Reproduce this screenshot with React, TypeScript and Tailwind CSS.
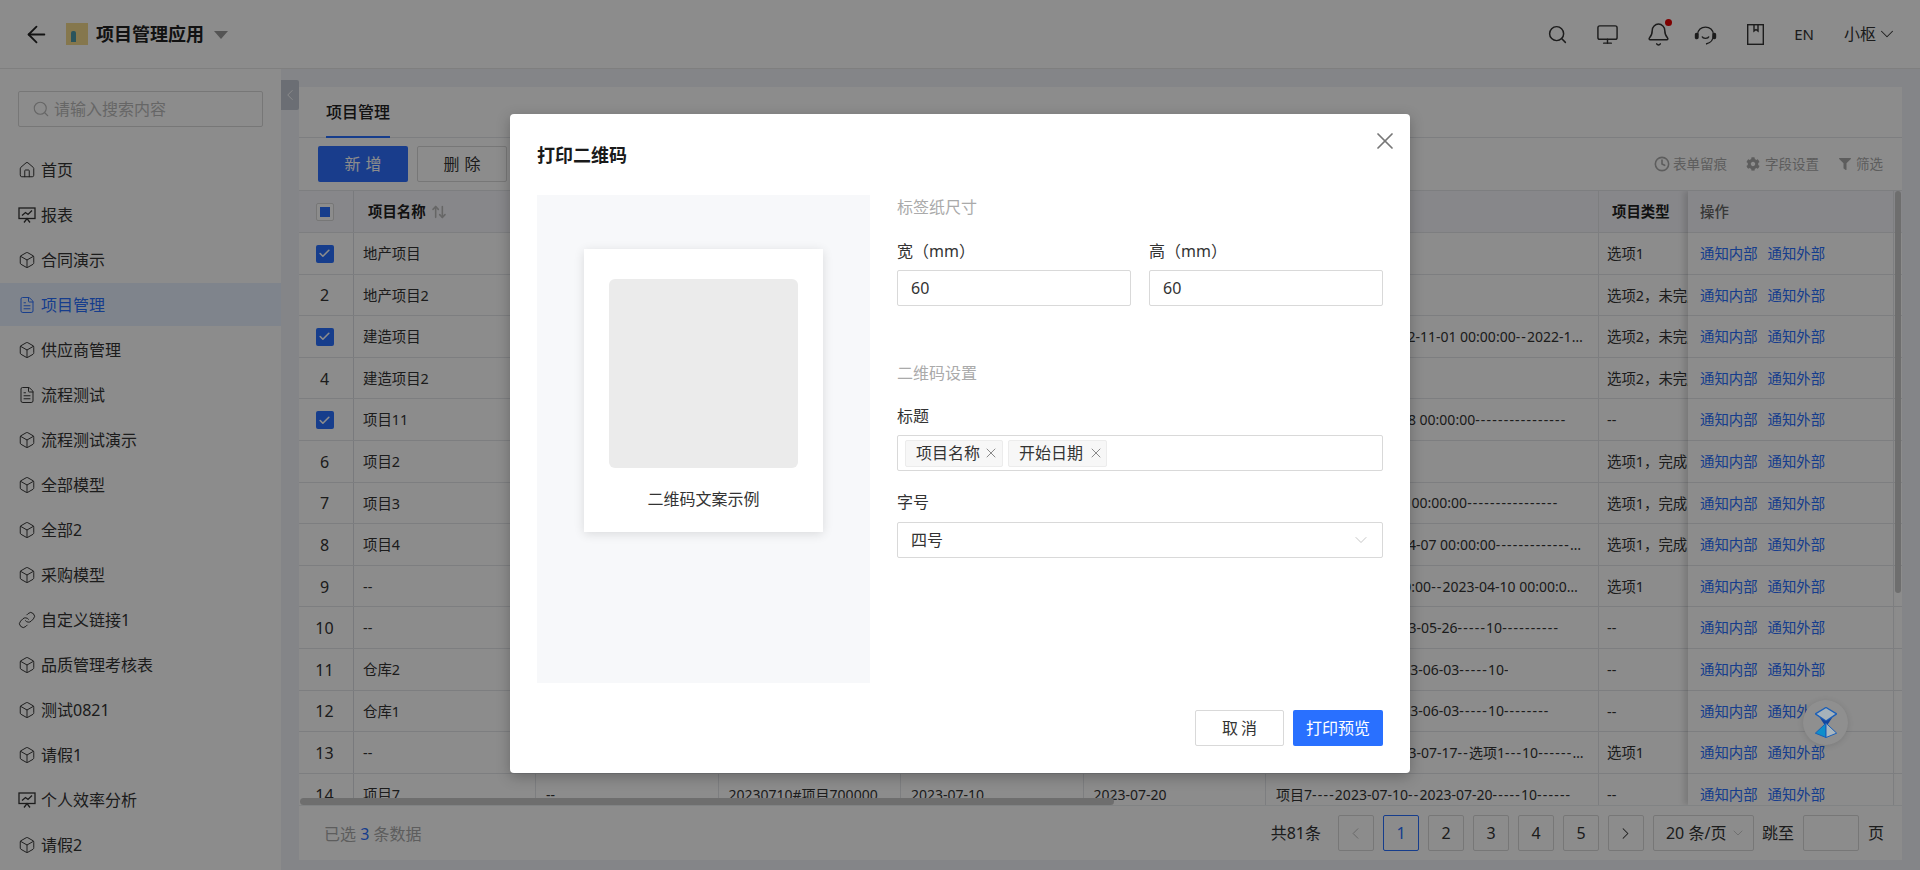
import React from "react";
import { Search, Monitor, Bell, ChevronDown, ChevronLeft, ChevronRight, Box, House, FileText, Link, X, Clock, ArrowLeft, ArrowUpDown, Check } from "lucide-react";
import { FaCog, FaFilter } from "react-icons/fa";

const FONT = '"Noto Sans","Noto Sans CJK SC",sans-serif';

function ChartBoard({ size = 17, strokeWidth = 1.4 }: { size?: number; strokeWidth?: number }) {
  return (
    <svg width={size} height={size} viewBox="0 0 18 18" fill="none" stroke="currentColor" strokeWidth={strokeWidth}>
      <rect x="1" y="2" width="16" height="10.5" />
      <path d="M4 9.5 L7.5 6.5 L10 8.5 L14 4.5" />
      <path d="M6 16.5 L9 12.5 L12 16.5" />
    </svg>
  );
}

type IconT = React.ComponentType<{ size?: number; strokeWidth?: number }>;
const menu: [string, IconT][] = [
  ["首页", House], ["报表", ChartBoard], ["合同演示", Box], ["项目管理", FileText], ["供应商管理", Box],
  ["流程测试", FileText], ["流程测试演示", Box], ["全部模型", Box], ["全部2", Box], ["采购模型", Box],
  ["自定义链接1", Link], ["品质管理考核表", Box], ["测试0821", Box], ["请假1", Box], ["个人效率分析", ChartBoard], ["请假2", Box],
];

type Row = { n: string; name: string; cols?: string[]; detail: string; type: string; checked?: boolean };
const D19 = "-------------------";
const rows: Row[] = [
  { n: "1", name: "地产项目", detail: "", type: "选项1", checked: true },
  { n: "2", name: "地产项目2", detail: "", type: "选项2，未完成" },
  { n: "3", name: "建造项目", detail: "建造项目---------2022-11-01 00:00:00--2022-11-30 00:00:00----", type: "选项2，未完成", checked: true },
  { n: "4", name: "建造项目2", detail: "", type: "选项2，未完成" },
  { n: "5", name: "项目11", detail: "项目11----2023-03-08 00:00:00----------------", type: "--", checked: true },
  { n: "6", name: "项目2", detail: "", type: "选项1，完成" },
  { n: "7", name: "项目3", detail: "项目3----2023-03-09 00:00:00----------------", type: "选项1，完成" },
  { n: "8", name: "项目4", detail: "项目4---------2023-04-07 00:00:00-------------------------", type: "选项1，完成" },
  { n: "9", name: "--", detail: "----2023-04-01 00:00:00--2023-04-10 00:00:00-------", type: "选项1" },
  { n: "10", name: "--", detail: D19 + "2023-05-26-----10----------", type: "--" },
  { n: "11", name: "仓库2", detail: "仓库2-------------2023-06-03-----10-", type: "--" },
  { n: "12", name: "仓库1", detail: "仓库1-------------2023-06-03-----10--------", type: "--" },
  { n: "13", name: "--", detail: D19 + "2023-07-17--选项1---10-----------------", type: "选项1" },
  { n: "14", name: "项目7", cols: ["--", "20230710#项目700000", "2023-07-10", "2023-07-20"], detail: "项目7----2023-07-10--2023-07-20-----10------", type: "--" },
];

function Detail({ text }: { text: string }) {
  return (
    <span className="truncate text-sm">
      {text.split(/(-{2,})/).map((part, i) =>
        part.startsWith("--") ? <span key={i} className="tracking-[1.2px]">{part}</span> : <span key={i}>{part}</span>
      )}
    </span>
  );
}

function HourglassLogo() {
  return (
    <svg width="22" height="31" viewBox="0 0 66 92" fill="none">
      <path d="M33 1 L65 20 L33 42 L1 20 Z" fill="#a6b2ba" stroke="#1b5fb8" strokeWidth="4" />
      <path d="M14 31 L33 42 L52 31 L38 52 L28 52 Z" fill="#14469e" />
      <path d="M33 48 L1 78 L33 91 Z" fill="#0f8fcb" stroke="#1b5fb8" strokeWidth="3" />
      <path d="M33 48 L65 78 L33 91 Z" fill="#aab6be" stroke="#1b5fb8" strokeWidth="3" />
    </svg>
  );
}

function Pager({ children, active, muted }: { children: React.ReactNode; active?: boolean; muted?: boolean }) {
  return (
    <div className={`w-9 h-9 flex items-center justify-center rounded-[2px] border bg-white text-base ${active ? "border-[#2970ff] text-[#2970ff]" : muted ? "border-[#d9d9d9] text-[#bbb]" : "border-[#d9d9d9] text-[#333]"}`}>
      {children}
    </div>
  );
}

function TableRow({ row }: { row: Row }) {
  return (
    <div className="flex h-[41.6px] shrink-0 border-b border-[#e4e6ea] text-[14.4px] text-[#333]">
      <div className="w-[55px] shrink-0 flex items-center justify-center border-r border-[#dcdfe4] pr-[3px] pt-[1px]">
        {row.checked ? (
          <span className="w-[18px] h-[18px] rounded-[2px] bg-[#2970ff] flex items-center justify-center"><Check size={13} color="#fff" strokeWidth={3} /></span>
        ) : (
          <span className="text-base">{row.n}</span>
        )}
      </div>
      <div className="w-[182px] shrink-0 flex items-center pl-[9px] pt-[1px] border-r border-[#e4e6ea]">{row.name}</div>
      {[0, 1, 2, 3].map((i) => (
        <div key={i} className="w-[182.5px] shrink-0 flex items-center pl-[10px] pt-[1px] text-sm border-r border-[#e4e6ea] whitespace-nowrap">{row.cols?.[i]}</div>
      ))}
      <div className="w-[333px] shrink-0 flex items-center pl-[10px] pr-[13px] pt-[1px] border-r border-[#e4e6ea]"><Detail text={row.detail} /></div>
      <div className="flex-1 flex items-center pl-[8px] pt-[1px] whitespace-nowrap overflow-hidden">{row.type}</div>
    </div>
  );
}

export default function App() {
  return (
    <div className="relative w-full h-screen overflow-hidden bg-[#f0f3f8] flex flex-col" style={{ fontFamily: FONT }}>
      {/* top bar */}
      <header className="h-[69px] shrink-0 bg-white border-b border-[#e8e8e8] flex items-center pl-[23px] pr-[22px]">
        <ArrowLeft size={27} strokeWidth={1.6} color="#222" />
        <div className="ml-[16px] w-[22px] h-[22px] bg-[#f2d98c] flex items-end justify-center"><span className="w-[5px] h-[11px] mb-[3px] mr-[8px] bg-[#4d9aa8] rounded-t-[2px]" /></div>
        <span className="ml-[8px] text-lg font-bold text-[#222]">项目管理应用</span>
        <span className="ml-[10px] mt-[1px] w-0 h-0 border-x-[7px] border-x-transparent border-t-[8px] border-t-[#999]" />
        <div className="flex-1" />
        <div className="flex items-center text-[#333]">
          <Search size={21} strokeWidth={1.7} />
          <Monitor size={23} strokeWidth={1.5} className="ml-[28px]" />
          <div className="relative ml-[27px]">
            <Bell size={25} strokeWidth={1.4} />
            <span className="absolute -top-[3px] right-[-1px] w-[7px] h-[7px] rounded-full bg-[#e60000]" />
          </div>
          <svg className="ml-[23px]" width="23" height="23" viewBox="0 0 23 23" fill="none" stroke="currentColor" strokeWidth="1.4">
            <path d="M3.5 12 C3.5 1.5 19.5 1.5 19.5 12 C19.5 16 17 20 12 21" />
            <path d="M8 13.5 C9 16 14 16 15 13.5" />
            <rect x="1.5" y="10.5" width="2.5" height="5" rx="1" fill="currentColor" />
            <rect x="19" y="10.5" width="2.5" height="5" rx="1" fill="currentColor" />
          </svg>
          <svg className="ml-[30px]" width="17" height="21" viewBox="0 0 17 21" fill="none" stroke="#333" strokeWidth="1.4"><rect x="0.7" y="0.7" width="15.6" height="19.6" /><path d="M7 1v6l2-1.5L11 7V1" /></svg>
          <span className="ml-[30px] text-[15px]">EN</span>
          <span className="ml-[30px] text-base">小枢</span>
          <ChevronDown size={22} strokeWidth={1.1} className="ml-0" />
        </div>
      </header>

      <div className="flex-1 flex min-h-0">
        {/* sidebar */}
        <aside className="w-[281px] shrink-0 bg-white overflow-hidden pt-[22px]">
          <div className="mx-[18px] h-[36px] border border-[#d9d9d9] rounded-[2px] flex items-center pl-[13px] text-base text-[#bbb]">
            <Search size={18} strokeWidth={1.5} />
            <span className="ml-[4px]">请输入搜索内容</span>
          </div>
          <nav className="mt-[21px]">
            {menu.map(([label, Icon]) => {
              const active = label === "项目管理";
              const cube = Icon === Box;
              return (
                <div key={label} className={`h-[43px] mb-[2px] flex items-center pl-[18px] text-base ${active ? "bg-[#e8f0ff] text-[#2970ff]" : "text-[#333]"}`}>
                  <span className="w-[18px] flex justify-center"><Icon size={cube ? 20 : 18} strokeWidth={1.3} /></span>
                  <span className="ml-[5px]">{label}</span>
                </div>
              );
            })}
          </nav>
        </aside>

        {/* handle */}
        <div className="w-[18px] shrink-0 pt-[11px]">
          <div className="h-[30px] bg-[#c3c9d4] rounded-r-[2px] flex items-center justify-center"><ChevronLeft size={18} color="#fff" strokeWidth={1.2} /></div>
        </div>

        {/* content */}
        <main className="w-[1603px] shrink-0 mt-[18px] mb-[10px] bg-white flex flex-col min-h-0">
          <div className="h-[51px] shrink-0 border-b border-[#e4e6ea] flex pl-[27px]">
            <div className="h-[51px] border-b-[2px] border-[#2970ff] pt-[1px] flex items-center text-base font-medium text-[#222]">项目管理</div>
          </div>
          <div className="h-[53px] shrink-0 border-b border-[#e4e6ea] flex items-center pl-[19px] pr-[19px]">
            <div className="w-[90px] h-9 rounded-[2px] bg-[#2f6fff] text-white text-base flex items-center justify-center tracking-[5px] pl-[5px]">新增</div>
            <div className="ml-[9px] w-[90px] h-9 rounded-[2px] border border-[#d9d9d9] text-[#333] text-base flex items-center justify-center tracking-[5px] pl-[5px]">删除</div>
            <div className="flex-1" />
            <div className="flex items-center text-[13.5px] text-[#aaa]">
              <Clock size={16} strokeWidth={2.4} />
              <span className="ml-[3px]">表单留痕</span>
              <FaCog size={14} className="ml-[19px]" />
              <span className="ml-[5px]">字段设置</span>
              <FaFilter size={12} className="ml-[20px]" />
              <span className="ml-[5px]">筛选</span>
            </div>
          </div>

          <div className="relative flex-1 min-h-0 overflow-hidden flex flex-col">
            <div className="h-[42px] shrink-0 flex bg-[#f6f6fb] border-b border-[#e4e6ea] text-[14.4px]">
              <div className="w-[55px] shrink-0 flex items-center justify-center border-r border-[#dcdfe4] pr-[3px]">
                <span className="w-[18px] h-[18px] rounded-[2px] border border-[#d9d9d9] bg-white flex items-center justify-center"><span className="w-[10px] h-[10px] bg-[#2970ff]" /></span>
              </div>
              <div className="w-[182px] shrink-0 flex items-center pl-[14px] font-bold text-[#222] border-r border-[#e4e6ea]">项目名称<ArrowUpDown size={16} strokeWidth={2.4} color="#bbb" className="ml-[5px]" /></div>
              <div className="w-[1063px] shrink-0 border-r border-[#e4e6ea]" />
              <div className="flex-1 flex items-center pl-[13px] font-bold text-[#222]">项目类型</div>
            </div>
            <div className="flex-1 min-h-0 overflow-hidden flex flex-col">
              {rows.map((r) => <TableRow key={r.n} row={r} />)}
            </div>
            {/* fixed action column */}
            <div className="absolute top-0 bottom-0 left-[1389px] w-[206px] bg-white border-r border-[#e4e6ea] shadow-[-4px_0_6px_rgba(0,0,0,0.14)] flex flex-col text-[14.4px] overflow-hidden">
              <div className="h-[42px] shrink-0 flex items-center pl-[12px] bg-[#f6f6fb] border-b border-[#e4e6ea] text-[#666] font-medium">操作</div>
              {rows.map((r) => (
                <div key={r.n} className="h-[41.6px] shrink-0 flex items-center pl-[12px] pt-[1px] gap-[10px] border-b border-[#e4e6ea] text-[#2970ff]">
                  <span>通知内部</span><span>通知外部</span>
                </div>
              ))}
            </div>
            <div className="absolute top-0 right-[1px] w-[6px] h-[402px] rounded-[3px] bg-[#c9c9c9]" />
            <div className="absolute bottom-0 left-[1px] w-[814px] h-[7px] rounded-[4px] bg-[#c9c9c9]" />
          </div>

          <footer className="h-[55px] shrink-0 border-t border-[#eceef1] flex items-center pl-[25px] pr-[18px]">
            <span className="text-base text-[#aaa] mt-[1px]">已选 <span className="text-[#2970ff]">3</span> 条数据</span>
            <div className="flex-1" />
            <span className="text-base text-[#333] mr-[17px]">共81条</span>
            <div className="flex items-center gap-[9px]">
              <Pager muted><ChevronLeft size={19} strokeWidth={1.2} /></Pager>
              <Pager active>1</Pager><Pager>2</Pager><Pager>3</Pager><Pager>4</Pager><Pager>5</Pager>
              <Pager><ChevronRight size={19} strokeWidth={1.3} /></Pager>
              <div className="w-[101px] h-9 border border-[#d9d9d9] rounded-[2px] flex items-center pl-[12px] text-base text-[#333]">20 条/页<ChevronDown size={16} strokeWidth={1.1} color="#bbb" className="ml-[4px]" /></div>
            </div>
            <span className="ml-[8px] text-base text-[#333]">跳至</span>
            <div className="ml-[9px] w-[56px] h-9 border border-[#d9d9d9] rounded-[2px]" />
            <span className="ml-[9px] text-base text-[#333]">页</span>
          </footer>
        </main>
      </div>

      {/* dim layer */}
      <div className="absolute inset-0 bg-black/45" />

      {/* floating helper */}
      <div className="absolute left-[1803px] top-[700px] w-[45px] h-[45px] rounded-full bg-[#8f8f8f] shadow-[0_1px_6px_rgba(0,0,0,0.12)] flex items-center justify-center"><HourglassLogo /></div>

      {/* modal */}
      <div className="absolute left-[510px] top-[114px] w-[900px] h-[659px] bg-white rounded-[4px] shadow-[0_4px_14px_rgba(0,0,0,0.25)] flex flex-col px-[27px]">
        <div className="h-[81px] shrink-0 flex items-center justify-between">
          <h2 className="text-lg font-bold text-[#1a1a1a]">打印二维码</h2>
          <X size={28} strokeWidth={1.5} color="#777" className="-mr-[16px] -mt-[27px]" />
        </div>
        <div className="flex">
          <div className="w-[333px] h-[488px] shrink-0 bg-[#f7f8fa] pt-[54px] flex justify-center">
            <div className="w-[239px] h-[283px] bg-white shadow-[0_2px_10px_rgba(0,0,0,0.12)] pt-[30px] flex flex-col items-center">
              <div className="w-[189px] h-[189px] rounded-[6px] bg-[#ebebeb]" />
              <div className="mt-[19px] text-base text-[#333]">二维码文案示例</div>
            </div>
          </div>
          <div className="ml-[27px] flex-1 text-base text-[#333]">
            <div className="text-[#aaa] leading-6">标签纸尺寸</div>
            <div className="mt-[20px] flex gap-[18px]">
              <div className="flex-1">
                <div className="leading-6">宽（mm）</div>
                <div className="mt-[7px] h-9 border border-[#d9d9d9] rounded-[2px] flex items-center pl-[13px]">60</div>
              </div>
              <div className="flex-1">
                <div className="leading-6">高（mm）</div>
                <div className="mt-[7px] h-9 border border-[#d9d9d9] rounded-[2px] flex items-center pl-[13px]">60</div>
              </div>
            </div>
            <div className="mt-[55px] text-[#aaa] leading-6">二维码设置</div>
            <div className="mt-[19px] leading-6">标题</div>
            <div className="mt-[7px] h-9 border border-[#d9d9d9] rounded-[2px] flex items-center pl-[7px] gap-[5px]">
              <span className="h-[27px] w-[98px] bg-[#f7f7f7] border border-[#ececec] rounded-[2px] flex items-center pl-[10px] text-base">项目名称<X size={16} strokeWidth={1.3} color="#777" className="ml-[3px]" /></span>
              <span className="h-[27px] w-[99px] bg-[#f7f7f7] border border-[#ececec] rounded-[2px] flex items-center pl-[10px] text-base">开始日期<X size={16} strokeWidth={1.3} color="#777" className="ml-[5px]" /></span>
            </div>
            <div className="mt-[19px] leading-6">字号</div>
            <div className="mt-[8px] h-9 border border-[#d9d9d9] rounded-[2px] flex items-center justify-between pl-[13px] pr-[11px]">四号<ChevronDown size={20} strokeWidth={1} color="#bbb" /></div>
          </div>
        </div>
        <div className="mt-[27px] flex justify-end gap-[9px]">
          <div className="w-[89px] h-9 rounded-[2px] border border-[#d9d9d9] flex items-center justify-center text-base text-[#333] tracking-[3px] pl-[3px]">取消</div>
          <div className="w-[90px] h-9 rounded-[2px] bg-[#2970ff] flex items-center justify-center text-base text-white">打印预览</div>
        </div>
      </div>
    </div>
  );
}
